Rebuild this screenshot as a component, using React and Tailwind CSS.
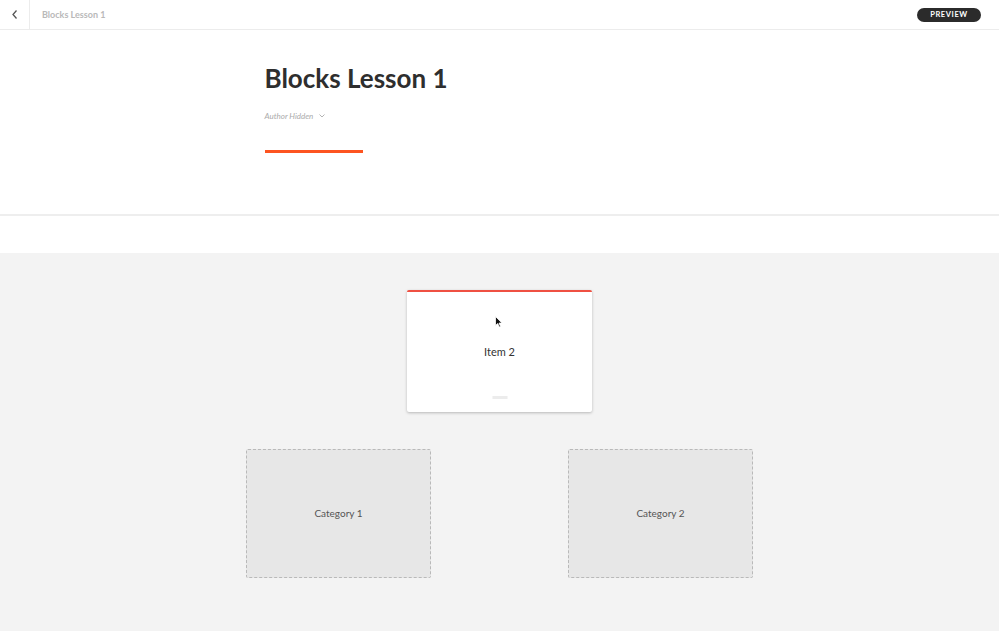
import React from 'react';

const font = { fontFamily: 'Lato, "Open Sans", sans-serif' };

const TopBar = () => (
  <div className="flex h-[30px] items-center border-b border-[#ececec] bg-white">
    <button className="flex h-full w-[30px] items-center justify-center border-r border-[#ececec] text-[#555]">
      <svg width="10" height="11" viewBox="0 0 10 11" fill="none" stroke="currentColor" strokeWidth="1.3">
        <path d="M6.5 1.5 3 5.5l3.5 4" />
      </svg>
    </button>
    <span className="ml-[12px] text-[9px] font-bold text-[#b9b9b9]">Blocks Lesson 1</span>
    <button className="ml-auto mr-[18px] flex h-[14px] w-[64px] items-center justify-center rounded-full bg-[#2b2b2b] text-[7.5px] font-bold tracking-[0.08em] text-white">
      PREVIEW
    </button>
  </div>
);

const Cursor = () => (
  <svg className="absolute left-[88px] top-[24px]" width="8" height="12" viewBox="0 0 8 12">
    <path d="M0.5 0.5v9l2.2-2 1.6 3.6 1.3-.6-1.6-3.4H7z" fill="#111" stroke="#fff" strokeWidth="0.8" />
  </svg>
);

export default function App() {
  return (
    <div className="min-h-[631px] bg-[#f3f3f3]" style={font}>
      <TopBar />

      {/* lesson header */}
      <div className="bg-white">
        <div className="mx-auto w-[470px] pt-[31px] pb-[61px]">
          <h1 className="text-[26px] font-bold leading-[34px] text-[#2e2e2e]">Blocks Lesson 1</h1>
          <div className="mt-[15px] flex items-center gap-[6px] text-[8px] italic text-[#ababab]">
            <span>Author Hidden</span>
            <svg width="6" height="4" viewBox="0 0 6 4" fill="none" stroke="#ababab" strokeWidth="0.9">
              <path d="M0.5 0.5 3 3l2.5-2.5" />
            </svg>
          </div>
          <div className="mt-[28px] h-[3px] w-[98px] bg-[#fd5420]" />
        </div>
        <div className="h-[2px] bg-[#eeeeee]" />
        <div className="h-[37px]" />
      </div>

      {/* sorting area */}
      <div className="flex flex-col items-center pt-[37px] pb-[53px]">
        <div className="relative flex h-[122px] w-[185px] items-center justify-center rounded-[2px] border-t-2 border-[#ef5042] bg-white shadow-[0_1px_3px_rgba(0,0,0,0.25)]">
          <Cursor />
          <span className="text-[11px] text-[#333]">Item 2</span>
          <div className="absolute bottom-[13px] left-1/2 h-[3px] w-[15px] -translate-x-1/2 bg-[#ececec]" />
        </div>

        <div className="mt-[37px] flex gap-[137px]">
          {['Category 1', 'Category 2'].map((c) => (
            <div
              key={c}
              className="flex h-[129px] w-[185px] items-center justify-center rounded-[2px] border border-dashed border-[#b9b9b9] bg-[#e7e7e7] text-[10px] text-[#555]"
            >
              {c}
            </div>
          ))}
        </div>
      </div>
    </div>
  );
}
